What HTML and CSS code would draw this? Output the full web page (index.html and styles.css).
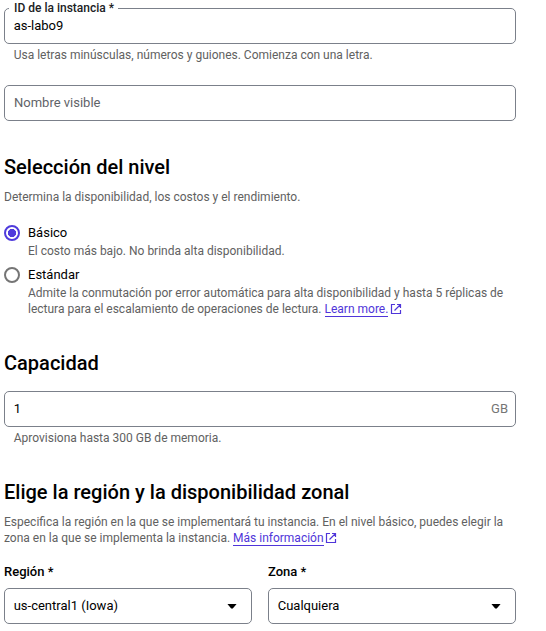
FILE: index.html
```html
<!DOCTYPE html>
<html lang="es">
<head>
<meta charset="utf-8">
<title>Crear instancia</title>
<link rel="stylesheet" href="styles.css">
</head>
<body>
<main class="form">
  <div class="field instance">
    <label class="floating">ID de la instancia *</label>
    <span class="value">as-labo9</span>
  </div>
  <p class="hint">Usa letras minúsculas, números y guiones. Comienza con una letra.</p>
  <div class="field name"><span class="placeholder">Nombre visible</span></div>

  <h2 class="tier-title">Selección del nivel</h2>
  <p class="copy">Determina la disponibilidad, los costos y el rendimiento.</p>
  <div class="option basic">
    <span class="radio checked"></span>
    <div><div class="option-title">Básico</div>
    <p class="copy">El costo más bajo. No brinda alta disponibilidad.</p></div>
  </div>
  <div class="option">
    <span class="radio"></span>
    <div><div class="option-title">Estándar</div>
    <p class="copy">Admite la conmutación por error automática para alta disponibilidad y hasta 5 réplicas de<br>lectura para el escalamiento de operaciones de lectura. <a class="link">Learn more.</a><svg class="ext" viewBox="0 0 12 12"><path d="M5 1.5H1.5v9h9V7M7 1.5h3.5V5M10.5 1.5l-6 6"/></svg></p></div>
  </div>

  <h2 class="capacity-title">Capacidad</h2>
  <div class="field capacity"><span class="value">1</span><span class="unit">GB</span></div>
  <p class="hint">Aprovisiona hasta 300 GB de memoria.</p>

  <h2 class="region-title">Elige la región y la disponibilidad zonal</h2>
  <p class="copy">Especifica la región en la que se implementará tu instancia. En el nivel básico, puedes elegir la<br>zona en la que se implementa la instancia. <a class="link">Más información</a><svg class="ext" viewBox="0 0 12 12"><path d="M5 1.5H1.5v9h9V7M7 1.5h3.5V5M10.5 1.5l-6 6"/></svg></p>
  <div class="selects">
    <div><div class="select-label">Región *</div>
      <div class="field"><span class="value">us-central1 (Iowa)</span><span class="arrow"></span></div></div>
    <div><div class="select-label">Zona *</div>
      <div class="field"><span class="value">Cualquiera</span><span class="arrow"></span></div></div>
  </div>
</main>
</body>
</html>
```
FILE: styles.css
```css
* { box-sizing: border-box; }
body { margin: 0; background: #fff; color: #000; font: 13px/20px Roboto, sans-serif; overflow: hidden; }
h2, p { margin: 0; }
.form { width: 516px; padding: 8px 0 0 4px; }
.field { position: relative; height: 36px; border: 1px solid #7b808a; border-radius: 5px; display: flex; align-items: center; justify-content: space-between; padding: 0 9px; }
.value { margin-left: -0.3px; }
.floating { position: absolute; left: 4px; top: -9px; padding: 0 4px 0 5px; background: #fff; font-size: 12px; line-height: 16px; font-weight: 500; color: #202124; }
.hint { margin: 3px 0 0 9.7px; font-size: 12px; line-height: 16px; color: #616161; }
.name { margin-top: 22px; }
.placeholder { color: #5f6368; }
h2 { font-size: 20px; line-height: 24px; font-weight: 500; letter-spacing: .01px; }
.tier-title { margin: 34px 0 10px; }
.copy { font-size: 12px; line-height: 16px; color: #616161; white-space: nowrap; }
.option { display: flex; gap: 8px; margin-top: 7px; }
.basic { margin-top: 19px; }
.option-title { line-height: 18px; margin-bottom: 1px; }
.radio { flex: none; width: 16px; height: 16px; border: 2px solid #757575; border-radius: 50%; margin-top: 1px; }
.checked { border-color: #4f3bdc; background: radial-gradient(circle, #4f3bdc 0 3.8px, transparent 4.4px); }
.link { color: #4f35d9; border-bottom: 1px solid #4f35d9; }
.ext { width: 12px; height: 12px; margin-left: 1.5px; vertical-align: -2px; fill: none; stroke: #4f35d9; stroke-width: 1.2; }
.capacity-title { margin: 34px 0 16px; }
.unit { color: #757575; margin-right: -2px; }
.region-title { margin: 34px 0 10px; }
.selects { display: grid; grid-template-columns: 1fr 1fr; gap: 16px; margin-top: 16px; }
.select-label { font-size: 13px; line-height: 20px; font-weight: 500; margin-bottom: 6px; }
.arrow { width: 10px; height: 5px; background: #000; clip-path: polygon(0 0, 100% 0, 58% 100%, 42% 100%); margin-right: 5px; }
```
